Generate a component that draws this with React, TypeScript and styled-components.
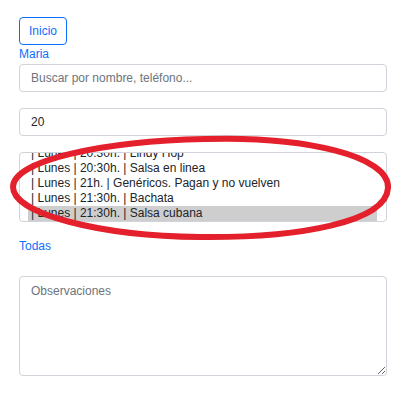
import React from "react";
import styled, { createGlobalStyle } from "styled-components";

const Global = createGlobalStyle`
  html, body { margin: 0; padding: 0; background: #fff; }
  body { font-family: "Liberation Sans", Arial, sans-serif; font-size: 12px; color: #212529; }
  * { box-sizing: border-box; }
`;

const Page = styled.div`
  position: relative;
  width: 403px;
  height: 397px;
  padding: 17px 16px 0 19px;
  display: flex;
  flex-direction: column;
  align-items: stretch;
`;

const Button = styled.button`
  align-self: flex-start;
  width: 48px;
  height: 28px;
  padding: 0;
  border: 1px solid #0d6efd;
  border-radius: 4px;
  background: #fff;
  color: #0d6efd;
  font-family: inherit;
  font-size: 12px;
  line-height: 14px;
`;

const LinkLabel = styled.a<{ $top: number; $bottom: number }>`
  display: block;
  margin-top: ${(p) => p.$top}px;
  margin-bottom: ${(p) => p.$bottom}px;
  color: #0d6efd;
  font-size: 12px;
  line-height: 14px;
  text-decoration: none;
`;

const Input = styled.input<{ $bottom: number }>`
  display: block;
  width: 100%;
  height: 28px;
  margin: 0 0 ${(p) => p.$bottom}px 0;
  padding: 0 11px;
  border: 1px solid #ced4da;
  border-radius: 4px;
  font-family: inherit;
  font-size: 12px;
  color: #212529;
  outline: none;
  &::placeholder { color: #6c757d; opacity: 1; }
`;

const ListBox = styled.div`
  height: 70px;
  border: 1px solid #ced4da;
  border-radius: 4px;
  overflow: hidden;
  padding: 0 9px 0 8px;
`;

const ListInner = styled.div`
  margin-top: -7px;
`;

const Option = styled.div<{ $selected?: boolean }>`
  height: 15px;
  padding: 0 2px 1px 3px;
  line-height: 14px;
  font-size: 12px;
  color: #212529;
  white-space: nowrap;
  background: ${(p) => (p.$selected ? "#cecece" : "transparent")};
`;

const TextArea = styled.textarea`
  display: block;
  width: 100%;
  height: 100px;
  padding: 7px 11px;
  border: 1px solid #ced4da;
  border-radius: 4px;
  font-family: inherit;
  font-size: 12px;
  line-height: 14px;
  color: #212529;
  outline: none;
  &::placeholder { color: #6c757d; opacity: 1; }
`;

const Annotation = styled.svg`
  position: absolute;
  left: 0;
  top: 0;
  pointer-events: none;
`;

const options = [
  "| Lunes | 20:30h. | Lindy Hop",
  "| Lunes | 20:30h. | Salsa en linea",
  "| Lunes | 21h. | Genéricos. Pagan y no vuelven",
  "| Lunes | 21:30h. | Bachata",
  "| Lunes | 21:30h. | Salsa cubana",
];

export default function App() {
  return (
    <>
      <Global />
      <Page>
        <Button>Inicio</Button>
        <LinkLabel $top={2} $bottom={3}>Maria</LinkLabel>
        <Input $bottom={16} placeholder="Buscar por nombre, teléfono..." />
        <Input $bottom={16} defaultValue="20" />
        <ListBox>
          <ListInner>
            {options.map((o, i) => (
              <Option key={i} $selected={i === options.length - 1}>
                {o}
              </Option>
            ))}
          </ListInner>
        </ListBox>
        <LinkLabel $top={17} $bottom={23}>Todas</LinkLabel>
        <TextArea placeholder="Observaciones" />
        <Annotation width="403" height="397" viewBox="0 0 403 397">
          <path
            d="M 205 139 C 305 136, 390 156, 388 188 C 386 222, 300 238, 200 237 C 100 236, 13 214, 13 187 C 13 160, 105 141, 205 139 Z"
            fill="none"
            stroke="#e3202b"
            strokeWidth="6"
          />
        </Annotation>
      </Page>
    </>
  );
}
